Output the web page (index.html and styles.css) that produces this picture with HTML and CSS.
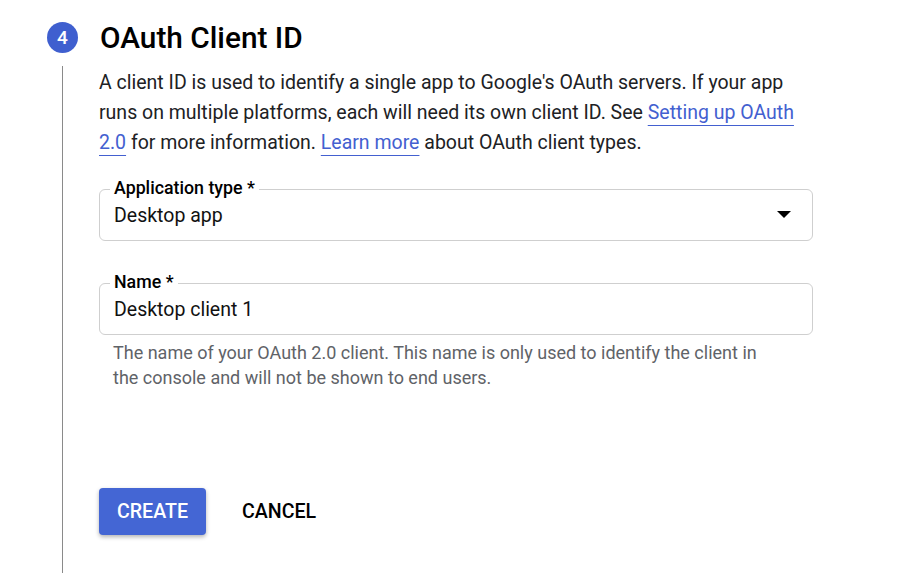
FILE: index.html
```html
<!DOCTYPE html>
<html>
<head>
<meta charset="utf-8">
<link rel="stylesheet" href="styles.css">
</head>
<body>
<div class="step">
  <div class="step-head">
    <div class="step-num">4</div>
    <h2 class="step-title">OAuth Client ID</h2>
  </div>
  <div class="step-body">
    <p class="intro">A client ID is used to identify a single app to Google's OAuth servers. If your app runs on multiple platforms, each will need its own client ID. See <a href="#" class="link">Setting up OAuth 2.0</a> for more information. <a href="#" class="link">Learn more</a> about OAuth client types.</p>

    <div class="field field-select">
      <span class="field-label">Application type *</span>
      <span class="field-value">Desktop app</span>
      <svg class="caret" width="14" height="8" viewBox="0 0 14 8"><path d="M0 0h14L7 7z" fill="#000"/></svg>
    </div>

    <div class="field field-name">
      <span class="field-label">Name *</span>
      <span class="field-value">Desktop client 1</span>
    </div>
    <p class="hint">The name of your OAuth 2.0 client. This name is only used to identify the client in the console and will not be shown to end users.</p>

    <div class="actions">
      <button class="btn btn-primary">CREATE</button>
      <button class="btn btn-text">CANCEL</button>
    </div>
  </div>
</div>
</body>
</html>
```

FILE: styles.css
```css
html, body {
  margin: 0;
  padding: 0;
  background: #fff;
  font-family: Roboto, "Liberation Sans", sans-serif;
  color: #202124;
}
.step {
  padding: 21px 0 0 47px;
  height: 552px;
  display: flex;
  flex-direction: column;
}
.step-head {
  display: flex;
  align-items: center;
  gap: 22px;
  height: 32px;
}
.step-num {
  width: 31px;
  height: 31px;
  border-radius: 50%;
  background: #3f5fcf;
  color: #fff;
  font-size: 19px;
  font-weight: 500;
  display: flex;
  align-items: center;
  justify-content: center;
}
.step-title {
  margin: 0;
  font-size: 29.8px;
  font-weight: 500;
  color: #000;
}
.step-body {
  margin: 13px 0 0 15px;
  border-left: 1px solid #8a8a8a;
  padding-left: 36px;
  flex: 1;
  width: 714px;
}
.intro {
  margin: 0;
  padding-top: 2px;
  font-size: 19.5px;
  line-height: 30px;
  color: #202124;
}
.link {
  color: #4360d0;
  text-decoration: underline;
  text-decoration-thickness: 1px;
  text-underline-offset: 6px;
}
.field {
  position: relative;
  height: 52px;
  box-sizing: border-box;
  border: 1px solid #cfcfcf;
  border-radius: 6px;
  display: flex;
  align-items: center;
  padding: 0 14px;
}
.field-select {
  margin-top: 31px;
}
.field-name {
  margin-top: 42px;
}
.field-label {
  position: absolute;
  left: 10px;
  top: -13px;
  background: #fff;
  padding: 0 4px;
  font-size: 17.8px;
  font-weight: 500;
  line-height: 22px;
  color: #000;
}
.field-value {
  font-size: 19.5px;
  color: #111;
  flex: 1;
}
.caret {
  margin-right: 7px;
}
.hint {
  margin: 5px 0 0 14px;
  font-size: 18px;
  line-height: 25px;
  color: #5f6368;
  width: 660px;
}
.actions {
  margin-top: 98px;
  display: flex;
  align-items: center;
  gap: 14px;
}
.btn {
  font-family: Roboto, "Liberation Sans", sans-serif;
  font-size: 19.6px;
  font-weight: 500;
  border: none;
  border-radius: 4px;
  height: 47px;
  padding: 0 18px;
  cursor: pointer;
}
.btn-primary {
  background: #4466d4;
  color: #fff;
  box-shadow: 0 2px 4px rgba(0,0,0,0.3);
}
.btn-text {
  background: transparent;
  color: #000;
  padding: 0 22px;
}
```
